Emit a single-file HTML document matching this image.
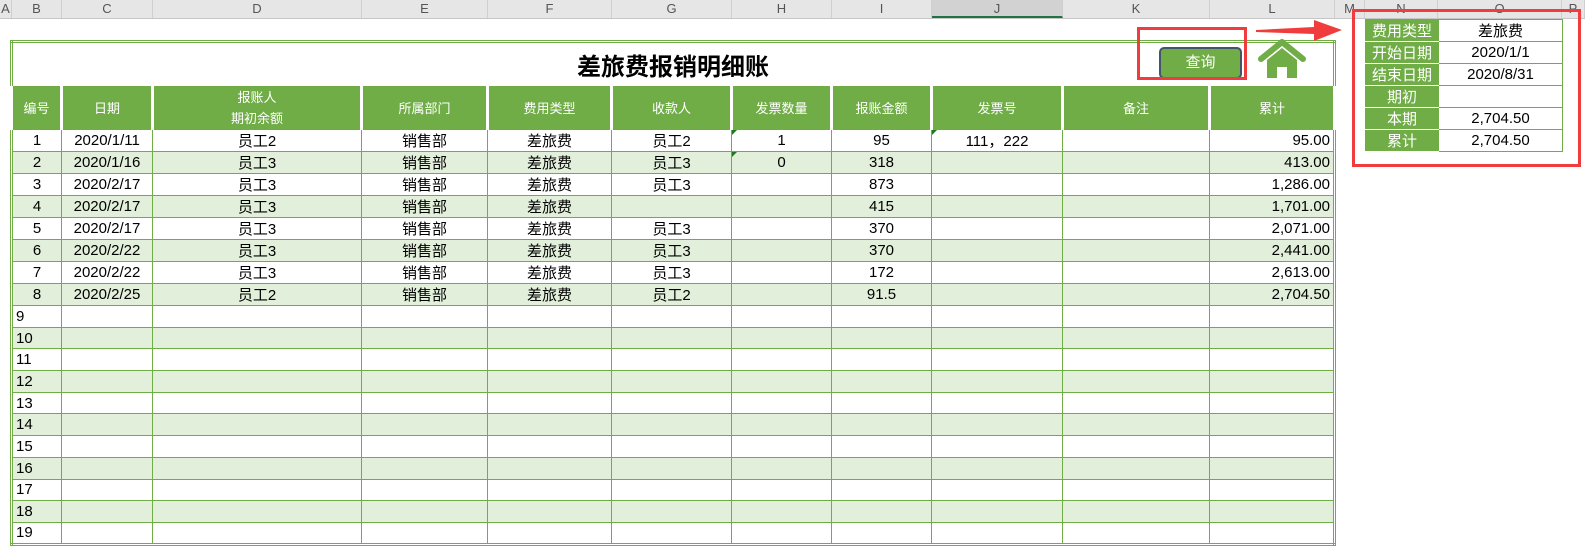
<!DOCTYPE html>
<html><head><meta charset="utf-8">
<style>
*{margin:0;padding:0;box-sizing:border-box}
body{width:1585px;height:536px;overflow:hidden;background:#fff;font-family:"Liberation Sans","Noto Sans CJK SC",sans-serif;position:relative;color:#000}
#colh{position:absolute;left:0;top:0;height:19px;width:1585px;background:#e6e6e6;border-bottom:1px solid #c6c6c6}
#colh div{position:absolute;top:0;height:18px;line-height:18px;text-align:center;font-size:13px;color:#555;border-right:1px solid #cfcfcf}
#main{position:absolute;left:10px;top:40px;border-collapse:collapse;table-layout:fixed;border:3px double #70ad47;font-size:15px}
#main td{border:1px solid #70ad47;height:21.7px;padding:0 3px;text-align:center;white-space:nowrap;overflow:hidden;position:relative}
#main tr.s td{background:#e2efda}
#main tr.h td{background:#70ad47;color:#fff;height:43px;border-left:3px double #fff;border-right:3px double #fff;font-size:13px;line-height:21px}
#main td.r{text-align:right}
.tri{position:absolute;left:0;top:0;width:0;height:0;border-top:5px solid #1e7a1e;border-right:5px solid transparent}
#side{position:absolute;left:1365px;top:19px;border-collapse:collapse;font-size:15px}
#side td{border:1px solid #70ad47;height:22px;text-align:center;padding:0}
#side td.l{background:#70ad47;color:#fff;width:73px;border-bottom:1px solid #fff;font-size:15px}
#side td.v{width:124px}
</style></head><body>
<div id="colh">
<div style="left:0;width:12px">A</div>
<div style="left:12px;width:50px">B</div>
<div style="left:62px;width:91px">C</div>
<div style="left:153px;width:209px">D</div>
<div style="left:362px;width:126px">E</div>
<div style="left:488px;width:124px">F</div>
<div style="left:612px;width:120px">G</div>
<div style="left:732px;width:100px">H</div>
<div style="left:832px;width:100px">I</div>
<div style="left:932px;width:131px;background:#d2d2d2;border-bottom:2px solid #217346">J</div>
<div style="left:1063px;width:147px">K</div>
<div style="left:1210px;width:125px">L</div>
<div style="left:1335px;width:30px">M</div>
<div style="left:1365px;width:73px">N</div>
<div style="left:1438px;width:124px">O</div>
<div style="left:1562px;width:23px">P</div>
</div>

<table id="main">
<colgroup><col style="width:50px"><col style="width:91px"><col style="width:209px"><col style="width:126px"><col style="width:124px"><col style="width:120px"><col style="width:100px"><col style="width:100px"><col style="width:131px"><col style="width:147px"><col style="width:125px"></colgroup>
<tr><td colspan="11" style="height:45px;font-size:24px;font-weight:bold;border-bottom:1px solid #70ad47">差旅费报销明细账</td></tr>
<tr class="h"><td>编号</td><td>日期</td><td>报账人<br>期初余额</td><td>所属部门</td><td>费用类型</td><td>收款人</td><td>发票数量</td><td>报账金额</td><td>发票号</td><td>备注</td><td>累计</td></tr>
<tr><td>1</td><td>2020/1/11</td><td>员工2</td><td>销售部</td><td>差旅费</td><td>员工2</td><td><span class="tri"></span>1</td><td>95</td><td><span class="tri"></span>111，222</td><td></td><td class="r">95.00</td></tr>
<tr class="s"><td>2</td><td>2020/1/16</td><td>员工3</td><td>销售部</td><td>差旅费</td><td>员工3</td><td><span class="tri"></span>0</td><td>318</td><td></td><td></td><td class="r">413.00</td></tr>
<tr><td>3</td><td>2020/2/17</td><td>员工3</td><td>销售部</td><td>差旅费</td><td>员工3</td><td></td><td>873</td><td></td><td></td><td class="r">1,286.00</td></tr>
<tr class="s"><td>4</td><td>2020/2/17</td><td>员工3</td><td>销售部</td><td>差旅费</td><td></td><td></td><td>415</td><td></td><td></td><td class="r">1,701.00</td></tr>
<tr><td>5</td><td>2020/2/17</td><td>员工3</td><td>销售部</td><td>差旅费</td><td>员工3</td><td></td><td>370</td><td></td><td></td><td class="r">2,071.00</td></tr>
<tr class="s"><td>6</td><td>2020/2/22</td><td>员工3</td><td>销售部</td><td>差旅费</td><td>员工3</td><td></td><td>370</td><td></td><td></td><td class="r">2,441.00</td></tr>
<tr><td>7</td><td>2020/2/22</td><td>员工3</td><td>销售部</td><td>差旅费</td><td>员工3</td><td></td><td>172</td><td></td><td></td><td class="r">2,613.00</td></tr>
<tr class="s"><td>8</td><td>2020/2/25</td><td>员工2</td><td>销售部</td><td>差旅费</td><td>员工2</td><td></td><td>91.5</td><td></td><td></td><td class="r">2,704.50</td></tr>
<tr><td style="text-align:left">9</td><td></td><td></td><td></td><td></td><td></td><td></td><td></td><td></td><td></td><td></td></tr>
<tr class="s"><td style="text-align:left">10</td><td></td><td></td><td></td><td></td><td></td><td></td><td></td><td></td><td></td><td></td></tr>
<tr><td style="text-align:left">11</td><td></td><td></td><td></td><td></td><td></td><td></td><td></td><td></td><td></td><td></td></tr>
<tr class="s"><td style="text-align:left">12</td><td></td><td></td><td></td><td></td><td></td><td></td><td></td><td></td><td></td><td></td></tr>
<tr><td style="text-align:left">13</td><td></td><td></td><td></td><td></td><td></td><td></td><td></td><td></td><td></td><td></td></tr>
<tr class="s"><td style="text-align:left">14</td><td></td><td></td><td></td><td></td><td></td><td></td><td></td><td></td><td></td><td></td></tr>
<tr><td style="text-align:left">15</td><td></td><td></td><td></td><td></td><td></td><td></td><td></td><td></td><td></td><td></td></tr>
<tr class="s"><td style="text-align:left">16</td><td></td><td></td><td></td><td></td><td></td><td></td><td></td><td></td><td></td><td></td></tr>
<tr><td style="text-align:left">17</td><td></td><td></td><td></td><td></td><td></td><td></td><td></td><td></td><td></td><td></td></tr>
<tr class="s"><td style="text-align:left">18</td><td></td><td></td><td></td><td></td><td></td><td></td><td></td><td></td><td></td><td></td></tr>
<tr><td style="text-align:left">19</td><td></td><td></td><td></td><td></td><td></td><td></td><td></td><td></td><td></td><td></td></tr>
</table>

<div style="position:absolute;left:1159px;top:47px;width:83px;height:32px;background:#70ad47;border:2px solid #44546a;border-radius:5px;color:#fff;font-size:15px;text-align:center;line-height:28px">查询</div>
<svg style="position:absolute;left:1256px;top:38px" width="52" height="42" viewBox="0 0 52 42">
<path d="M5 21 L26 4 L47 21" fill="none" stroke="#70ad47" stroke-width="6" stroke-linecap="round" stroke-linejoin="round"/>
<path d="M11 22 L26 10 L41 22 L41 40 L31 40 L31 29 L21 29 L21 40 L11 40 Z" fill="#70ad47"/>
</svg>
<div style="position:absolute;left:1137px;top:27px;width:110px;height:53px;border:3px solid #f03c3c"></div>
<svg style="position:absolute;left:1254px;top:18px" width="90" height="26">
<polygon points="2,12 60,9 60,2 88,12 60,23 60,16 2,14" fill="#f03c3c"/>
</svg>
<div style="position:absolute;left:1352px;top:9px;width:229px;height:158px;border:3px solid #f03c3c"></div>

<table id="side">
<tr><td class="l">费用类型</td><td class="v">差旅费</td></tr>
<tr><td class="l">开始日期</td><td class="v">2020/1/1</td></tr>
<tr><td class="l">结束日期</td><td class="v">2020/8/31</td></tr>
<tr><td class="l">期初</td><td class="v"></td></tr>
<tr><td class="l">本期</td><td class="v">2,704.50</td></tr>
<tr><td class="l">累计</td><td class="v">2,704.50</td></tr>
</table>
</body></html>
